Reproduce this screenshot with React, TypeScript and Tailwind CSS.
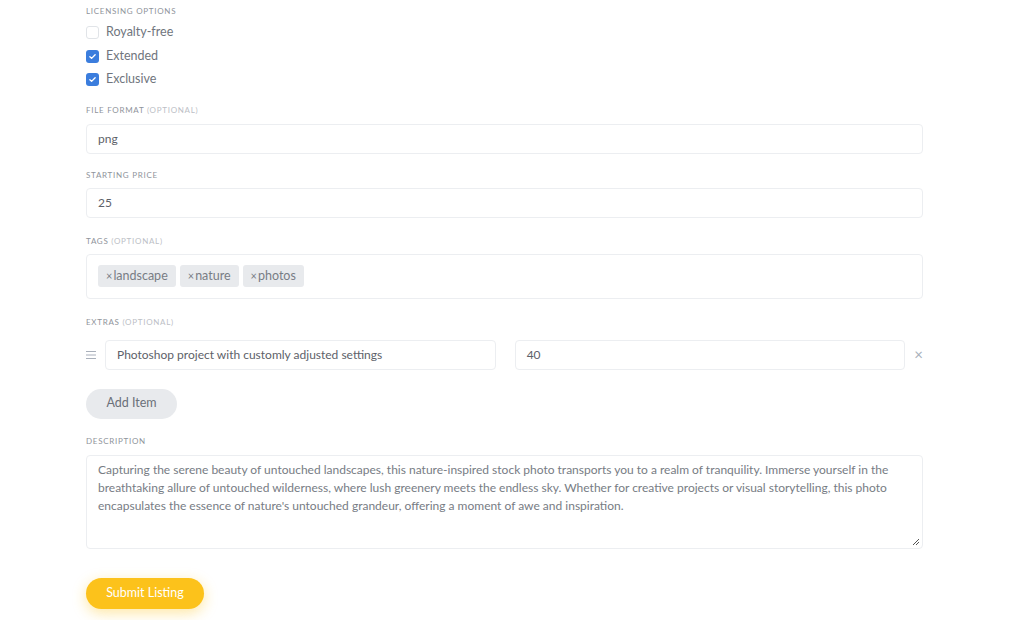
import React from 'react';

const font = { fontFamily: 'Lato, "Noto Sans", sans-serif' };

function Label({ text, optional }: { text: string; optional?: boolean }) {
  return (
    <div className="text-[8px] tracking-[0.09em] uppercase text-[#8f949b] leading-none">
      {text}
      {optional && <span className="text-[#bcc0c6]"> (Optional)</span>}
    </div>
  );
}

function Check({ checked, label }: { checked: boolean; label: string }) {
  return (
    <div className="flex items-center gap-[7px] h-[23.5px]">
      {checked ? (
        <span className="w-[13px] h-[13px] rounded-[3px] bg-[#3b7ddd] flex items-center justify-center">
          <svg width="9" height="9" viewBox="0 0 12 12" fill="none">
            <path d="M2.5 6.2l2.3 2.3 4.7-4.8" stroke="white" strokeWidth="1.8" strokeLinecap="round" strokeLinejoin="round" />
          </svg>
        </span>
      ) : (
        <span className="w-[13px] h-[13px] rounded-[3px] border border-[#e1e4e8] bg-white" />
      )}
      <span className="text-[12.5px] text-[#70757d]">{label}</span>
    </div>
  );
}

function Input({ value, className = '' }: { value: string; className?: string }) {
  return (
    <div className={`h-[30px] border border-[#eceef1] rounded-[4px] bg-white flex items-center px-[11px] text-[12px] text-[#5d6169] ${className}`}>
      {value}
    </div>
  );
}

function Tag({ text }: { text: string }) {
  return (
    <span className="h-[22px] px-[8px] rounded-[3px] bg-[#e8eaed] flex items-center text-[12.5px] text-[#787d85]">
      <span className="text-[11px] mr-[1px]">×</span>
      {text}
    </span>
  );
}

export default function App() {
  return (
    <div className="min-h-[620px] bg-white" style={font}>
      <div className="ml-[86px] w-[837px] pt-[7px]">
        <Label text="Licensing Options" />
        <div className="mt-[6px]">
          <Check checked={false} label="Royalty-free" />
          <Check checked label="Extended" />
          <Check checked label="Exclusive" />
        </div>

        <div className="mt-[14px]">
          <Label text="File Format" optional />
          <Input value="png" className="mt-[10px]" />
        </div>

        <div className="mt-[17px]">
          <Label text="Starting Price" />
          <Input value="25" className="mt-[9px]" />
        </div>

        <div className="mt-[19px]">
          <Label text="Tags" optional />
          <div className="mt-[9px] h-[45px] border border-[#eceef1] rounded-[4px] flex items-center gap-[4px] px-[11px]">
            <Tag text="landscape" />
            <Tag text="nature" />
            <Tag text="photos" />
          </div>
        </div>

        <div className="mt-[19px]">
          <Label text="Extras" optional />
          <div className="mt-[14px] flex items-center">
            <svg width="10" height="10" viewBox="0 0 10 10" className="mr-[9px]">
              <path d="M0 1.5h10M0 5h10M0 8.5h10" stroke="#a9b0bb" strokeWidth="1.2" />
            </svg>
            <Input value="Photoshop project with customly adjusted settings" className="w-[392px]" />
            <Input value="40" className="w-[392px] ml-[19px]" />
            <span className="ml-[9px] text-[#a9b0bb] text-[15px] leading-none">×</span>
          </div>
        </div>

        <button className="mt-[19px] h-[30px] w-[91px] rounded-full bg-[#e8eaed] text-[12.5px] text-[#6b7079]">
          Add Item
        </button>

        <div className="mt-[18px]">
          <Label text="Description" />
          <div className="relative mt-[10px] h-[94px] border border-[#eceef1] rounded-[4px] px-[11px] pt-[5px] text-[12px] leading-[18px] text-[#777c84]">
            Capturing the serene beauty of untouched landscapes, this nature-inspired stock photo transports you to a realm of tranquility. Immerse yourself in the breathtaking allure of untouched wilderness, where lush greenery meets the endless sky. Whether for creative projects or visual storytelling, this photo encapsulates the essence of nature's untouched grandeur, offering a moment of awe and inspiration.
            <svg width="8" height="8" viewBox="0 0 8 8" className="absolute right-[2px] bottom-[2px]">
              <path d="M7 1L1 7M7 4L4 7" stroke="#555" strokeWidth="1" />
            </svg>
          </div>
        </div>

        <button className="mt-[29px] h-[31px] w-[118px] rounded-full bg-[#fcc21b] text-[12.5px] text-white shadow-[0_4px_14px_rgba(252,194,27,0.4)]">
          Submit Listing
        </button>
      </div>
    </div>
  );
}
